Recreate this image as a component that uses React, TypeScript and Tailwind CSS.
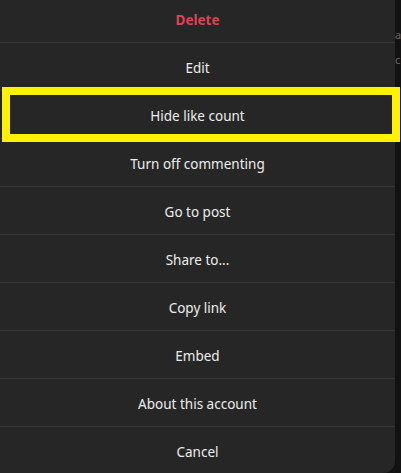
const items = [
  "Edit",
  "Hide like count",
  "Turn off commenting",
  "Go to post",
  "Share to...",
  "Copy link",
  "Embed",
  "About this account",
  "Cancel",
];

export default function App() {
  return (
    <div className="relative flex h-[473px] w-[401px] overflow-hidden bg-[#121212] font-['Noto_Sans',sans-serif] text-[13.5px]">
      <div className="-mt-[5px] h-[478px] w-[395px] shrink-0 overflow-hidden rounded-br-xl bg-[#262626]">
        <button className="flex h-[48px] w-full items-center justify-center border-b border-[#363636] pt-[3px] font-bold text-[#dc4452]">
          Delete
        </button>
        {items.map((label, i) => (
          <button
            key={label}
            className={
              i === items.length - 1
                ? "flex h-[48px] w-full items-center justify-center pt-[3px] text-[#ededed]"
                : "flex h-[48px] w-full items-center justify-center border-b border-[#363636] pt-[3px] text-[#ededed]"
            }
          >
            {label}
          </button>
        ))}
      </div>
      <div className="flex flex-col pt-[22px] text-[11px] leading-[25px] text-[#6b6b6b]">
        <span>a</span>
        <span>c</span>
      </div>
      <div className="pointer-events-none absolute left-[2px] top-[87px] h-[55px] w-[398px] border-[8px] border-[#fff200]" />
    </div>
  );
}
